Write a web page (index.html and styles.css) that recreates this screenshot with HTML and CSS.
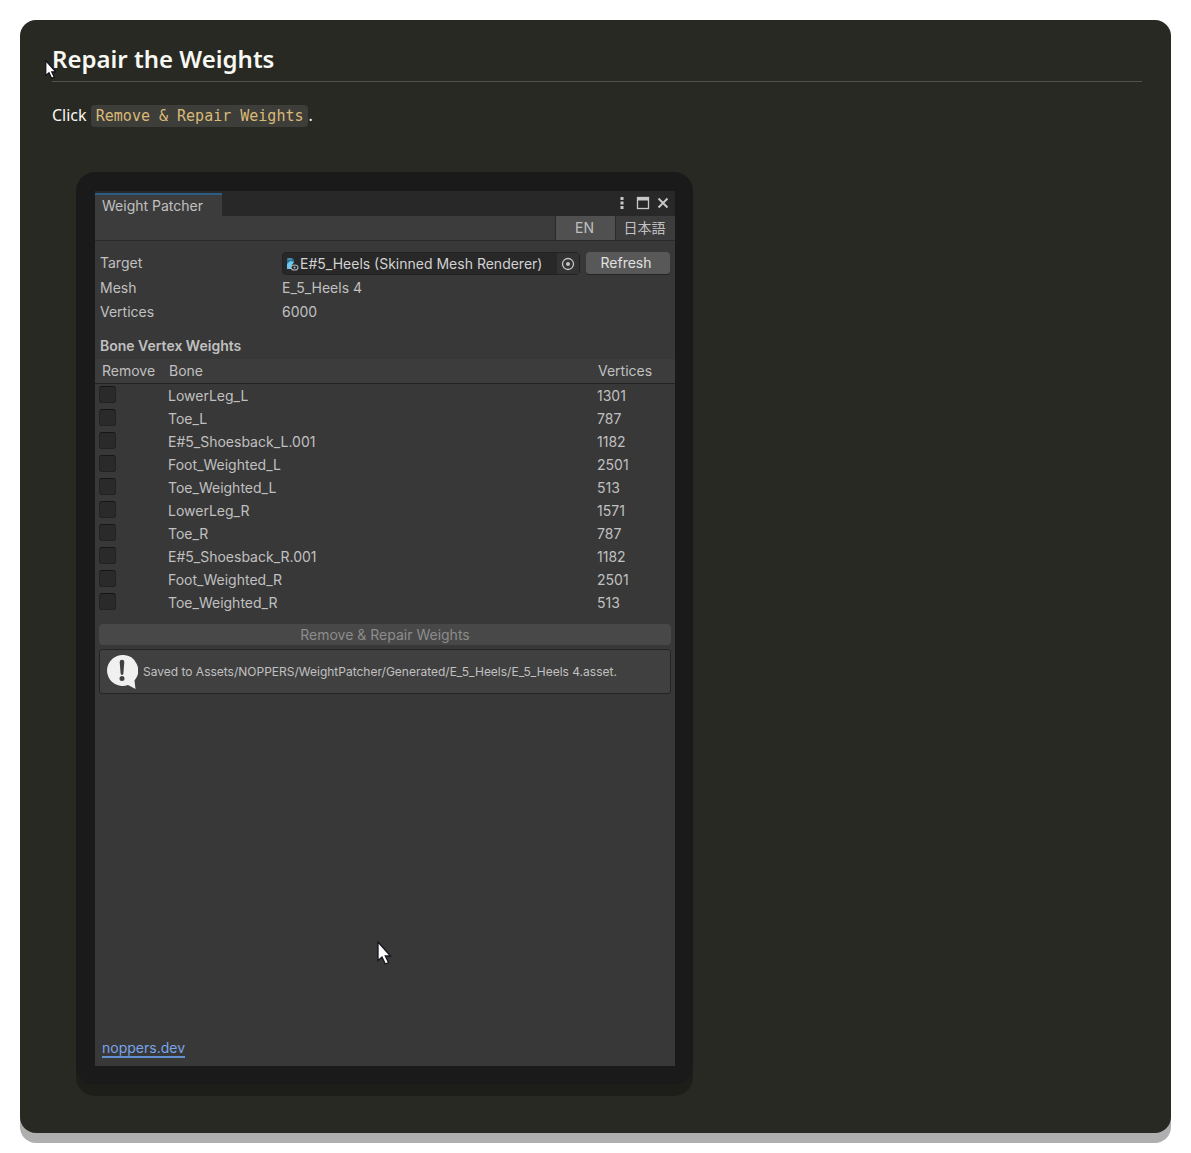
FILE: index.html
```
<!DOCTYPE html>
<html lang="en">
  <head>
    <meta charset="UTF-8" />
    <meta name="viewport" content="width=device-width, initial-scale=1.0" />
    <title>Repair the Weights</title>
    <link rel="stylesheet" href="styles.css">
  </head>
  <body>
    <main class="card">
      <h2>Repair the Weights</h2>
      <p class="intro">Click <code>Remove &amp; Repair Weights</code>.</p>

      <div class="frame">
        <div class="window">
          <div class="tabbar">
            <button class="tab">Weight Patcher</button>
            <div class="window-buttons">
              <button aria-label="Menu">
                <svg width="6" height="14" viewBox="0 0 6 14" fill="#c8c8c8">
                  <rect x="1.500" y="1" width="3" height="3" />
                  <rect x="1.500" y="5.500" width="3" height="3" />
                  <rect x="1.500" y="10" width="3" height="3" />
                </svg>
              </button>
              <button aria-label="Maximize">
                <svg width="14" height="14" viewBox="0 0 14 14">
                  <rect x="1.500" y="1.500" width="11" height="11" fill="none" stroke="#c8c8c8" stroke-width="1.300" />
                  <rect x="1" y="1" width="12" height="3.500" fill="#c8c8c8" />
                </svg>
              </button>
              <button aria-label="Close">
                <svg width="12" height="12" viewBox="0 0 12 12">
                  <path d="M1.500 1.500l9 9M10.500 1.500l-9 9" stroke="#c8c8c8" stroke-width="1.900" />
                </svg>
              </button>
            </div>
          </div>

          <div class="toolbar">
            <button class="active">EN</button>
            <button lang="ja">日本語</button>
          </div>

          <div class="fields">
            <label for="target">Target</label>
            <div class="target">
              <div class="object-field">
                <svg width="14" height="14" viewBox="0 0 14 14">
                  <path d="M2 1h5l2 2v3l-3 1-4 3z" fill="#2f6f8f" />
                  <path d="M2 7l3-3 4 1-2 3v4H2z" fill="#6cc8ee" />
                  <path d="M3 2h4" stroke="#5aa9cc" />
                  <ellipse cx="9.500" cy="10.500" rx="3.500" ry="2.500" fill="#282828" stroke="#a9b4ba" stroke-width="1.200" />
                  <circle cx="9.500" cy="10.500" r="1" fill="#a9b4ba" />
                </svg>
                <input type="text" id="target" value="E#5_Heels (Skinned Mesh Renderer)" readonly />
                <button class="picker" aria-label="Select object">
                  <svg width="14" height="14" viewBox="0 0 14 14">
                    <circle cx="7" cy="7" r="5.500" fill="none" stroke="#c4c4c4" stroke-width="1.300" />
                    <circle cx="7" cy="7" r="2" fill="#c4c4c4" />
                  </svg>
                </button>
              </div>
              <button class="refresh">Refresh</button>
            </div>
            <span>Mesh</span>
            <span>E_5_Heels 4</span>
            <span>Vertices</span>
            <span>6000</span>
          </div>

          <h3>Bone Vertex Weights</h3>
          <table>
            <thead>
              <tr>
                <th class="col-remove">Remove</th>
                <th>Bone</th>
                <th class="col-vertices">Vertices</th>
              </tr>
            </thead>
            <tbody>
              <tr>
                <td><input type="checkbox" id="b1" /></td>
                <td><label for="b1">LowerLeg_L</label></td>
                <td>1301</td>
              </tr>
              <tr>
                <td><input type="checkbox" id="b2" /></td>
                <td><label for="b2">Toe_L</label></td>
                <td>787</td>
              </tr>
              <tr>
                <td><input type="checkbox" id="b3" /></td>
                <td><label for="b3">E#5_Shoesback_L.001</label></td>
                <td>1182</td>
              </tr>
              <tr>
                <td><input type="checkbox" id="b4" /></td>
                <td><label for="b4">Foot_Weighted_L</label></td>
                <td>2501</td>
              </tr>
              <tr>
                <td><input type="checkbox" id="b5" /></td>
                <td><label for="b5">Toe_Weighted_L</label></td>
                <td>513</td>
              </tr>
              <tr>
                <td><input type="checkbox" id="b6" /></td>
                <td><label for="b6">LowerLeg_R</label></td>
                <td>1571</td>
              </tr>
              <tr>
                <td><input type="checkbox" id="b7" /></td>
                <td><label for="b7">Toe_R</label></td>
                <td>787</td>
              </tr>
              <tr>
                <td><input type="checkbox" id="b8" /></td>
                <td><label for="b8">E#5_Shoesback_R.001</label></td>
                <td>1182</td>
              </tr>
              <tr>
                <td><input type="checkbox" id="b9" /></td>
                <td><label for="b9">Foot_Weighted_R</label></td>
                <td>2501</td>
              </tr>
              <tr>
                <td><input type="checkbox" id="b10" /></td>
                <td><label for="b10">Toe_Weighted_R</label></td>
                <td>513</td>
              </tr>
            </tbody>
          </table>

          <button class="repair" disabled>Remove &amp; Repair Weights</button>

          <div class="message">
            <svg width="32" height="34" viewBox="0 0 32 34">
              <path d="M16 0a15.500 15.500 0 1 0 6 30L29.500 34 28.500 25.500A15.500 15.500 0 0 0 16 0z" fill="#f0f0f0" />
              <path d="M13.700 7a2.300 2.300 0 0 1 4.600 0l-.9 11.500a1.400 1.400 0 0 1-2.800 0z" fill="#404040" />
              <circle cx="16" cy="23.500" r="2.500" fill="#404040" />
            </svg>
            <span>Saved to Assets/NOPPERS/WeightPatcher/Generated/E_5_Heels/E_5_Heels 4.asset.</span>
          </div>

          <a class="site" href="#">noppers.dev</a>

          <svg class="cursor cursor-window" width="15" height="24" viewBox="0 0 15 24">
            <path d="M1 1v18.500l4-3.500 3.300 7 3.200-1.500-3.200-6.500h5.200z" fill="#fff" stroke="#15151f" stroke-width="1.300" />
          </svg>
        </div>
      </div>

      <svg class="cursor cursor-page" width="12" height="19" viewBox="0 0 15 24">
        <path d="M1 1v18.500l4-3.500 3.300 7 3.200-1.500-3.200-6.500h5.200z" fill="#fff" stroke="#0a0a14" stroke-width="1.300" />
      </svg>
    </main>
  </body>
</html>
```

FILE: styles.css
```
* {
  box-sizing: border-box;
}
body {
  margin: 0;
  padding: 20px;
  background-color: #fff;
  font-family: "Noto Sans", "Open Sans", sans-serif;
}
.card {
  position: relative;
  padding: 20px 29px 49px 32px;
  border-radius: 16px;
  background-color: #282923;
  box-shadow: 0 10px 0 #afafaf;
  color: #f8f8f2;
}
h2 {
  margin: 0 0 19px;
  padding-bottom: 4px;
  border-bottom: 1px solid #52534e;
  font-size: 24px;
  font-weight: 600;
  line-height: 37px;
}
.intro {
  margin: 0 0 42px;
  font-size: 16px;
  line-height: 28px;
}
code {
  padding: 2px 5px;
  border-radius: 4px;
  background-color: #3d3e3a;
  color: #dbb977;
  font-family: "DejaVu Sans Mono", monospace;
  font-size: 15px;
}

.frame {
  max-width: 617px;
  margin-left: 24px;
  padding: 19px 18px 18px 19px;
  border-radius: 19px;
  background-color: #1a1a1a;
  box-shadow: 0 12px 0 #1d1e19;
}
.window {
  position: relative;
  display: flex;
  flex-direction: column;
  aspect-ratio: 580 / 875;
  background-color: #383838;
  color: #c0c0c0;
  font-family: Inter, "Noto Sans CJK JP", sans-serif;
  font-size: 14px;
  line-height: 22px;
}
button {
  padding: 0;
  border: none;
  background: none;
  color: inherit;
  font: inherit;
}

.tabbar {
  display: flex;
  justify-content: space-between;
  height: 25px;
  padding-top: 2px;
  background-color: #282828;
}
.tab {
  padding: 0 19px 0 7px;
  border-top: 2px solid #2c5d87;
  background-color: #3c3c3c;
}
.window-buttons {
  display: flex;
  align-items: center;
  gap: 7px;
  padding: 0 6px 4px 0;
}
.window-buttons button {
  display: flex;
}
.window-buttons button:first-child {
  margin-right: 4px;
}
.toolbar {
  display: flex;
  justify-content: flex-end;
  height: 25px;
  border-bottom: 1px solid #2a2a2a;
  background-color: #3c3c3c;
}
.toolbar button {
  width: 60px;
  padding-right: 2px;
  border-left: 1px solid #2a2a2a;
}
.toolbar .active {
  background-color: #505050;
}

.fields {
  display: grid;
  grid-template-columns: 182px 1fr;
  row-gap: 2px;
  padding: 11px 5px 12px;
}
.target {
  display: flex;
  gap: 6px;
  height: 23px;
}
.object-field {
  display: flex;
  flex: 1;
  align-items: center;
  min-width: 0;
  padding-left: 2px;
  border: 1px solid #222;
  border-radius: 4px;
  background-color: #282828;
}
.object-field input {
  flex: 1;
  min-width: 0;
  height: 21px;
  padding: 0 0 0 1px;
  border: none;
  background: none;
  color: #d2d2d2;
  font: inherit;
}
.picker {
  display: flex;
  align-items: center;
  align-self: stretch;
  padding: 0 4px;
  background-color: #333;
}
.refresh {
  width: 84px;
  padding-right: 4px;
  border-bottom: 1px solid #242424;
  border-radius: 4px;
  background-color: #585858;
  color: #e0e0e0;
}

h3 {
  margin: 0;
  padding: 0 5px 2px;
  font-size: 14px;
  font-weight: 600;
}
table {
  width: 100%;
  border-collapse: collapse;
  table-layout: fixed;
}
th {
  height: 24px;
  padding: 0 0 0 7px;
  border-bottom: 1px solid #222;
  background-color: #3c3c3c;
  font-weight: 400;
  text-align: left;
}
th + th {
  padding-left: 1px;
}
.col-remove {
  width: 73px;
}
.col-vertices {
  width: 78px;
}
td {
  height: 23px;
  padding: 0;
}
tbody::before {
  display: table-row;
  height: 1px;
  content: "";
}
td input {
  display: block;
  width: 17px;
  height: 17px;
  margin: 0 0 2px 4px;
  border: 1px solid #222;
  border-top-color: #161616;
  border-radius: 3px;
  background-color: #2a2a2a;
  appearance: none;
}

.repair {
  height: 21px;
  margin: 10px 4px 4px;
  border-radius: 4px;
  background-color: #484848;
  color: #8c8c8c;
}
.message {
  display: flex;
  align-items: center;
  gap: 5px;
  height: 45px;
  margin: 0 4px;
  padding: 0 6px;
  border: 1px solid #242424;
  border-radius: 3px;
  background-color: #404040;
  font-size: 12px;
}
.message svg {
  flex: none;
}
.site {
  align-self: flex-start;
  margin: auto 7px 8px;
  border-bottom: 2px solid #6391d0;
  color: #7aa5e8;
  line-height: 17px;
  text-decoration: none;
}

.cursor {
  position: absolute;
}
.cursor-window {
  top: 750px;
  left: 282px;
}
.cursor-page {
  top: 40px;
  left: 25px;
}
```
